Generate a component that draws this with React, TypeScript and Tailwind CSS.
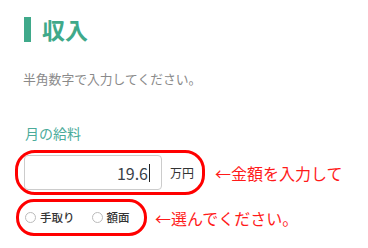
export default function App() {
  return (
    <div
      className="w-[368px] h-[248px] bg-white pl-[15px] pt-[17px]"
      style={{ fontFamily: '"Noto Sans CJK JP", "Noto Sans", sans-serif' }}
    >
      {/* Heading */}
      <div className="flex items-center ml-[9px] h-[25px]">
        <div className="w-[7px] h-[25px] bg-[#3fa98a]" />
        <h2 className="ml-[11px] text-[23px] leading-none font-bold text-[#3fa98a]">収入</h2>
      </div>

      <p className="ml-[8px] mt-[29px] text-[12.8px] leading-[16px] text-[#8a8a8a]">
        半角数字で入力してください。
      </p>

      <p className="ml-[10px] mt-[37px] text-[14px] leading-[18px] text-[#4bab9a]">月の給料</p>

      {/* Amount input */}
      <div className="flex items-center mt-[8px]">
        <div className="flex items-center w-[190px] h-[45px] border-[3px] border-[#ff0000] rounded-[20px] pl-[6px]">
          <div className="w-[138px] h-[35px] border border-[#cccccc] rounded-[4px] flex items-center justify-end pr-[11px] text-[16px] text-[#3a3f48]">
            <span>19.6</span>
            <span className="w-px h-[18px] bg-[#222] ml-[1px]" />
          </div>
          <span className="ml-[8px] text-[12px] text-[#333]">万円</span>
        </div>
        <span className="ml-[10px] text-[16px] text-[#ff1a1a]">←金額を入力して</span>
      </div>

      {/* Radio choices */}
      <div className="flex items-center mt-[4px]">
        <div className="flex items-center w-[131px] h-[37px] ml-[1px] border-[3px] border-[#ff0000] rounded-[18px] pl-[6px]">
          <label className="flex items-center">
            <span className="w-[11px] h-[11px] rounded-full border border-[#bbb] bg-white" />
            <span className="ml-[4px] text-[11.5px] font-medium text-[#333]">手取り</span>
          </label>
          <label className="flex items-center ml-[17px]">
            <span className="w-[11px] h-[11px] rounded-full border border-[#bbb] bg-white" />
            <span className="ml-[4px] text-[11.5px] font-medium text-[#333]">額面</span>
          </label>
        </div>
        <span className="ml-[8px] text-[16px] text-[#ff1a1a]">←選んでください。</span>
      </div>
    </div>
  )
}
